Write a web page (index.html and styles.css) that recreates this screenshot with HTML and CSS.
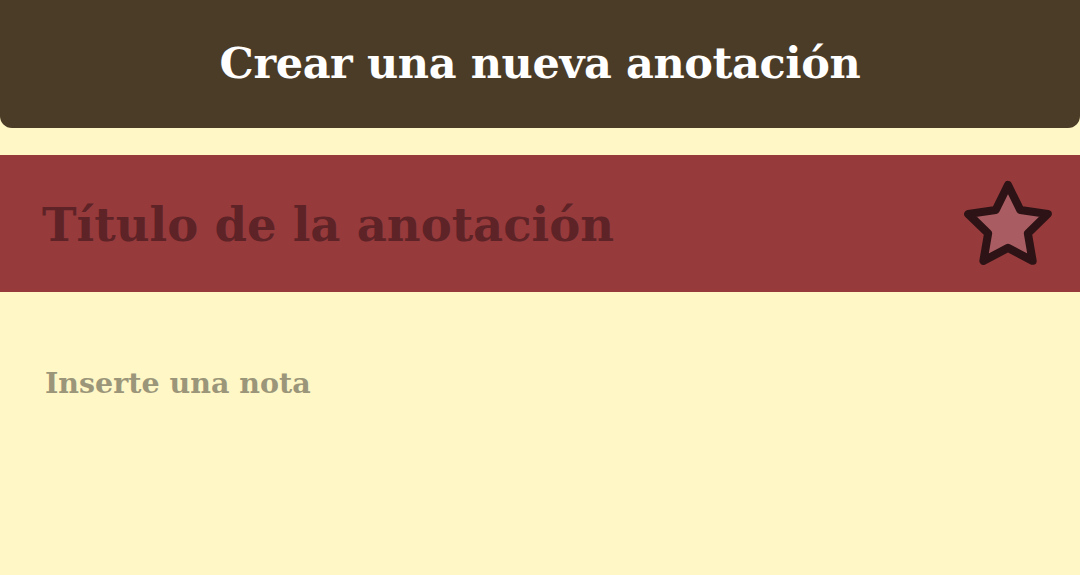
FILE: index.html
```html
<!DOCTYPE html>
<html lang="es">
<head>
<meta charset="utf-8">
<link rel="stylesheet" href="styles.css">
</head>
<body>
<header class="topbar">
  <h1 class="topbar-title">Crear una nueva anotación</h1>
</header>
<section class="title-band">
  <div class="note-title">Título de la anotación</div>
  <svg class="star" viewBox="0 0 24 24" width="100" height="100">
    <path d="M12 2.4l2.95 6 6.6.95-4.78 4.66 1.13 6.58L12 17.5l-5.9 3.1 1.13-6.58-4.78-4.66 6.6-.95z" fill="#a95d62" stroke="#2d1315" stroke-width="1.95" stroke-linejoin="round"/>
  </svg>
</section>
<main class="note-body">
  <div class="placeholder">Inserte una nota</div>
</main>
</body>
</html>
```
FILE: styles.css
```css
html, body {
  margin: 0;
  padding: 0;
  background: #fff7c6;
  height: 100%;
  font-family: "DejaVu Serif", "Liberation Serif", serif;
}
.topbar {
  background: #4b3c28;
  height: 128px;
  border-radius: 0 0 12px 12px;
  display: flex;
  align-items: center;
  justify-content: center;
}
.topbar-title {
  margin: 0;
  color: #ffffff;
  font-size: 43px;
  font-weight: bold;
  letter-spacing: -0.4px;
  padding-bottom: 2px;
}
.title-band {
  margin-top: 27px;
  background: #963a3c;
  height: 137px;
  display: flex;
  align-items: center;
  justify-content: space-between;
  padding: 0 22px 0 42px;
}
.note-title {
  color: #5e2326;
  font-size: 46.5px;
  font-weight: bold;
  letter-spacing: 0;
  padding-top: 2px;
}
.star {
  display: block;
  margin-top: 2px;
}
.note-body {
  padding: 74px 45px;
}
.placeholder {
  color: #9b9679;
  font-size: 28.5px;
  font-weight: bold;
}
```
